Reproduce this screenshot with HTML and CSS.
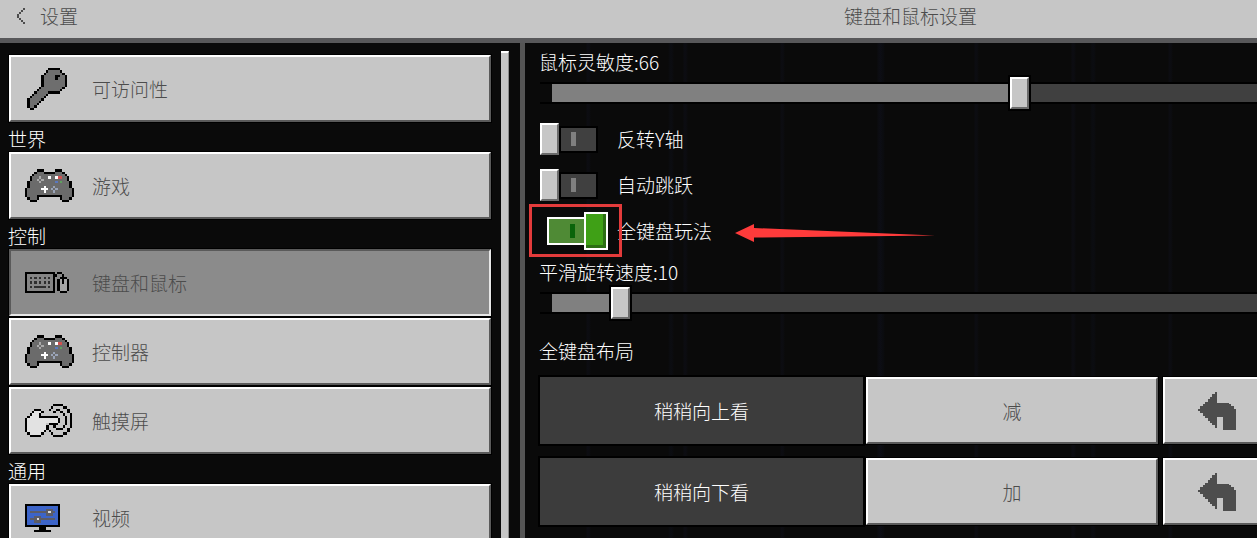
FILE: index.html
```
<!DOCTYPE html>
<html lang="zh-CN">
<head>
    <meta charset="UTF-8">
    <meta name="viewport" content="width=device-width, initial-scale=1.0">
    <title>键盘和鼠标设置</title>
    <link rel="stylesheet" href="styles.css">
</head>
<body>
    <!-- pixel icons used more than once -->
    <svg class="sprites" aria-hidden="true">
        <symbol id="gamepad" viewBox="0 0 21 14">
            <path fill="#6b6b6b" d="M5 1h3v1h5v-1h3v1h1v1h1v2h1v3h1v4h-1v1h-3v-2h-11v2h-3v-1h-1v-4h1v-3h1v-2h1v-1h1z"/>
            <path stroke="#000" d="M5 .5h3M13 .5h3M4 1.5h1M8 1.5h5M16 1.5h1M3 2.5h1M17 2.5h1M2 3.5h1M18 3.5h1M2 4.5h1M18 4.5h1M1 5.5h1M19 5.5h1M1 6.5h1M19 6.5h1M1 7.5h1M19 7.5h1M0 8.5h1M20 8.5h1M0 9.5h1M20 9.5h1M0 10.5h1M20 10.5h1M0 11.5h1M5 11.5h11M20 11.5h1M1 12.5h1M5 12.5h1M15 12.5h1M19 12.5h1M2 13.5h3M16 13.5h3"/>
            <path stroke="#aaa" d="M6 3.5h1M5 4.5h1M7 4.5h1M6 5.5h1"/>
            <path stroke="#9aa4b8" d="M12 7.5h1M11 8.5h1M13 8.5h1M12 9.5h1"/>
            <path stroke="#fff" d="M8 7.5h1M7 8.5h3M8 9.5h1M10 3.5h1M13 3.5h1"/>
            <path stroke="#d05050" d="M14 3.5h2"/>
            <path stroke="#5a78c0" d="M13 5.5h1"/>
            <path stroke="#5ea05e" d="M15 5.5h1"/>
        </symbol>
        <symbol id="undo" viewBox="0 0 16 16">
            <path fill="#4d4d4d" d="M8 0H7V1H6V2H5V3H4V4H3V5H2V6H1V7H0V8H1V9H2V10H3V11H4V12H5V13H6V14H7V15H8V10.5H10.5V16H16V7H15V6H14V5H13V4.5H8z"/>
        </symbol>
    </svg>

    <header class="topbar">
        <button class="back">
            <svg class="back-icon" viewBox="0 0 5 8" aria-hidden="true"><path stroke="#4c4c4c" d="M4 .5h1M3 1.5h1M2 2.5h1M1 3.5h1M1 4.5h1M2 5.5h1M3 6.5h1M4 7.5h1"/></svg>
            设置
        </button>
        <h1 class="title">键盘和鼠标设置</h1>
    </header>

    <div class="layout">
        <nav class="sidebar">
            <div class="menu">
                <button class="item">
                    <svg class="icon icon-key" viewBox="0 0 17 18" aria-hidden="true">
                        <path fill="#6e6e6e" d="M9 1h5v1h1v1h1v5h-1v2h-6v1h-1v1h-1v1h-1v1h-1v1h-1v1h-1v1h-2v-4h1v-1h1v-1h1v-1h1v-1h1v-1h1v-5h1v-1h1z"/>
                        <path stroke="#000" d="M9 .5h5M8 1.5h1M14 1.5h1M7 2.5h1M15 2.5h1M6 3.5h1M12 3.5h2M16 3.5h1M6 4.5h1M12 4.5h1M16 4.5h1M6 5.5h1M16 5.5h1M6 6.5h1M16 6.5h1M6 7.5h1M16 7.5h1M5 8.5h1M15 8.5h1M4 9.5h1M14 9.5h1M3 10.5h1M9 10.5h5M2 11.5h1M8 11.5h1M1 12.5h1M7 12.5h1M0 13.5h1M6 13.5h1M0 14.5h1M5 14.5h1M0 15.5h1M4 15.5h1M0 16.5h1M3 16.5h1M1 17.5h2"/>
                    </svg>
                    可访问性
                </button>
                <h2 class="group">世界</h2>
                <button class="item">
                    <svg class="icon icon-gamepad" aria-hidden="true"><use href="#gamepad"/></svg>
                    游戏
                </button>
                <h2 class="group">控制</h2>
                <button class="item selected">
                    <svg class="icon icon-keyboard" viewBox="0 0 19 9" aria-hidden="true">
                        <path fill="#000" d="M0 0h13v9h-13z"/>
                        <path fill="#858585" d="M1 1h11v7h-11z"/>
                        <path fill="#a6a6a6" d="M15 3h3v5h-3z"/>
                        <path stroke="#000" d="M14 .5h2M13 1.5h1M16 1.5h1M15 2.5h3M14 3.5h1M16 3.5h1M18 3.5h1M14 4.5h1M16 4.5h1M18 4.5h1M14 5.5h1M18 5.5h1M14 6.5h1M18 6.5h1M14 7.5h1M18 7.5h1M15 8.5h3"/>
                        <path stroke="#2e2e2e" d="M2 2.5h1M4 2.5h1M6 2.5h1M8 2.5h1M10 2.5h1M2 4.5h1M4 4.5h1M6 4.5h1M8 4.5h1M10 4.5h1M2 6.5h1M4 6.5h5M10 6.5h1"/>
                    </svg>
                    键盘和鼠标
                </button>
                <button class="item">
                    <svg class="icon icon-gamepad" aria-hidden="true"><use href="#gamepad"/></svg>
                    控制器
                </button>
                <button class="item">
                    <svg class="icon icon-touch" viewBox="0 0 20 14" aria-hidden="true">
                        <path fill="#e2e2e2" d="M4 3h3v3h7v2h-5v3h-1v1h-1v1h-5v-1h-1v-6h1v-2h2z"/>
                        <path stroke="#000" d="M12 .5h4M11 1.5h1M16 1.5h2M4 2.5h3M10 2.5h1M13 2.5h2M18 2.5h1M3 3.5h1M7 3.5h1M12 3.5h1M15 3.5h1M18 3.5h1M2 4.5h1M6 4.5h1M16 4.5h1M19 4.5h1M1 5.5h1M6 5.5h8M17 5.5h1M19 5.5h1M0 6.5h1M14 6.5h1M17 6.5h1M19 6.5h1M0 7.5h1M14 7.5h1M17 7.5h1M19 7.5h1M0 8.5h1M10 8.5h4M17 8.5h1M19 8.5h1M0 9.5h1M9 9.5h1M12 9.5h1M16 9.5h1M19 9.5h1M0 10.5h1M9 10.5h1M13 10.5h3M18 10.5h1M0 11.5h1M8 11.5h1M10 11.5h1M18 11.5h1M1 12.5h1M7 12.5h1M11 12.5h1M16 12.5h2M2 13.5h5M12 13.5h4"/>
                    </svg>
                    触摸屏
                </button>
                <h2 class="group">通用</h2>
                <button class="item">
                    <svg class="icon icon-video" viewBox="0 0 15 12" aria-hidden="true">
                        <path fill="#000" d="M0 0h15v10h-15zM6 10h3v1h2v1h-7v-1h2z"/>
                        <path fill="#3c64c8" d="M1 1h13v8h-13z"/>
                        <path stroke="#5c5c66" d="M2 3.5h11M2 6.5h11M9 2.5h3M9 4.5h3M4 5.5h3M4 7.5h3"/>
                        <path stroke="#ddd" d="M10 3.5h1M5 6.5h1"/>
                    </svg>
                    视频
                </button>
            </div>
            <div class="scrollbar"></div>
        </nav>

        <main class="panel">
            <div class="content">
                <label class="caption" for="sensitivity">鼠标灵敏度:66</label>
                <input class="slider" id="sensitivity" type="range" min="0" max="100" value="66" style="--value: 0.66">

                <div class="option">
                    <input class="toggle" id="invertY" type="checkbox">
                    <label for="invertY">反转Y轴</label>
                </div>
                <div class="option">
                    <input class="toggle" id="autoJump" type="checkbox">
                    <label for="autoJump">自动跳跃</label>
                </div>
                <div class="option">
                    <input class="toggle" id="fullKeyboard" type="checkbox" checked>
                    <label for="fullKeyboard">全键盘玩法</label>
                    <span class="highlight"></span>
                    <svg class="pointer" viewBox="0 0 200 20" aria-hidden="true"><path fill="#ff3b3b" d="M0 10L19 1V5L200 12.5L19 14.5V19z"/></svg>
                </div>

                <label class="caption" for="rotation">平滑旋转速度:10</label>
                <input class="slider" id="rotation" type="range" min="0" max="100" value="10" style="--value: 0.1">

                <h2 class="caption layout-title">全键盘布局</h2>
                <div class="binding">
                    <span class="action">稍稍向上看</span>
                    <button class="key">减</button>
                    <button class="key" aria-label="重置"><svg class="icon-undo" aria-hidden="true"><use href="#undo"/></svg></button>
                </div>
                <div class="binding">
                    <span class="action">稍稍向下看</span>
                    <button class="key">加</button>
                    <button class="key" aria-label="重置"><svg class="icon-undo" aria-hidden="true"><use href="#undo"/></svg></button>
                </div>
            </div>
        </main>
    </div>

    <script>
        // keep the filled part of the track under the thumb
        document.querySelectorAll('.slider').forEach(slider => {
            slider.addEventListener('input', () => {
                slider.style.setProperty('--value', slider.value / 100);
                const label = document.querySelector('label[for="' + slider.id + '"]');
                label.innerText = label.innerText.split(':')[0] + ':' + slider.value;
            });
        });
    </script>
</body>
</html>
```

FILE: styles.css
```
*, *::before, *::after {
    box-sizing: border-box;
}
body {
    margin: 0;
    height: 100vh;
    display: flex;
    flex-direction: column;
    overflow: hidden;
    background-color: #0a0a0a;
    color: #FFFFFF;
    font-family: "Noto Sans CJK SC", sans-serif;
    font-size: 19px;
    font-weight: 300;
    line-height: 30px;
}
h1, h2 {
    margin: 0;
    font-size: inherit;
    font-weight: inherit;
}
button {
    font: inherit;
    color: #4c4c4c;
    cursor: pointer;
}
svg {
    flex: none;
    shape-rendering: crispEdges;
}
.sprites {
    position: absolute;
    width: 0;
    height: 0;
}

/* top bar */
.topbar {
    flex: none;
    display: flex;
    height: 43px;
    padding-bottom: 6px;
    align-items: center;
    overflow: hidden;
    background-color: #c6c6c6;
    border-bottom: 5px solid #58585a;
    color: #4c4c4c;
}
.back {
    flex: 0 0 520px;
    display: flex;
    align-items: center;
    gap: 15px;
    padding: 0 0 0 15px;
    background: none;
    border: none;
}
.back-icon {
    width: 10px;
    height: 16px;
}
/* the right column runs on past the window edge */
.title {
    flex: 1;
    margin-right: -44px;
    text-align: center;
}

.layout {
    flex: 1;
    display: flex;
    min-height: 0;
}

/* left menu */
.sidebar {
    flex: 0 0 525px;
    display: flex;
    gap: 10px;
    padding: 12px 11px 0 9px;
    border-right: 5px solid #555555;
    overflow: hidden;
}
.menu {
    flex: 1;
}
.item {
    display: flex;
    align-items: center;
    width: 100%;
    height: 67px;
    padding: 0 0 0 14px;
    background-color: #c6c6c6;
    border: 2px solid;
    border-color: #FFFFFF #5a5a5a #5a5a5a #FFFFFF;
    box-shadow: 0 0 0 1px #000000;
    text-align: left;
}
.item + .item {
    margin-top: 2px;
}
.item.selected {
    background-color: #8b8b8b;
    border-color: #5a5a5a #e6e6e6 #e6e6e6 #5a5a5a;
}
.group {
    height: 30px;
    margin-left: -1px;
    line-height: 34px;
}
.icon-key {
    width: 40px;
    height: 42px;
    margin: 0 25px 0 2px;
}
.icon-gamepad {
    width: 49px;
    height: 33px;
    margin-right: 18px;
}
.icon-keyboard {
    width: 44px;
    height: 21px;
    margin-right: 23px;
}
.icon-touch {
    width: 47px;
    height: 33px;
    margin-right: 20px;
}
.icon-video {
    width: 35px;
    height: 28px;
    margin-right: 32px;
}
.scrollbar {
    width: 8px;
    margin-top: -4px;
    background-color: #c6c6c6;
    border-top: 2px solid #FFFFFF;
    border-right: 1px solid #8b8b8b;
}

/* right panel */
.panel {
    flex: 1;
    min-width: 0;
    padding: 4px 0 0 15px;
    overflow: hidden;
    background-image:
        repeating-linear-gradient(to right, transparent 0 61px, rgba(30, 34, 80, 0.1) 62px 64px, transparent 66px 97px),
        repeating-linear-gradient(to right, transparent 0 143px, rgba(20, 30, 64, 0.12) 145px 147px, transparent 149px 211px);
}
.content {
    margin-right: -14px;
}
.caption {
    display: block;
    margin-left: -1px;
}
.slider {
    -webkit-appearance: none;
    appearance: none;
    display: block;
    width: 100%;
    height: 32px;
    margin: 0;
    background: none;
    cursor: pointer;
}
.slider::-webkit-slider-runnable-track {
    --fill: calc(10px + (100% - 19px) * var(--value));
    height: 18px;
    background: linear-gradient(to right, transparent 12px, #808080 12px, #808080 var(--fill), #404040 var(--fill));
    box-shadow: 0 2px 0 #000000, 0 -2px 0 #000000;
}
.slider::-webkit-slider-thumb {
    -webkit-appearance: none;
    width: 19px;
    height: 32px;
    margin-top: -7px;
    background-color: #c6c6c6;
    border: 2px solid;
    border-color: #FFFFFF #6a6a6a #6a6a6a #FFFFFF;
    box-shadow: 0 0 0 2px #000000;
}
.option {
    position: relative;
    display: flex;
    align-items: center;
    height: 46px;
}
.slider + .option {
    margin-top: 7px;
}
.option + .caption {
    margin-top: 3px;
}
.toggle {
    -webkit-appearance: none;
    appearance: none;
    display: flex;
    align-items: center;
    width: 69px;
    height: 38px;
    margin: 0 8px 0 0;
    cursor: pointer;
}
.toggle::before {
    content: "";
    width: 19px;
    height: 32px;
    margin-right: 2px;
    background-color: #c6c6c6;
    border: 2px solid;
    border-color: #FFFFFF #6a6a6a #6a6a6a #FFFFFF;
}
.toggle::after {
    content: "";
    width: 35px;
    height: 23px;
    background: linear-gradient(#808080, #808080) 10px center / 5px 14px no-repeat #404040;
    box-shadow: 0 0 0 2px #000000;
}
.toggle:checked {
    flex-direction: row-reverse;
    justify-content: flex-end;
    padding-left: 7px;
}
.toggle:checked::before {
    width: 24px;
    height: 38px;
    margin: 0;
    background-color: #3fa016;
    border-color: #FFFFFF;
    box-shadow: inset -3px -3px 0 #2c6e14;
}
.toggle:checked::after {
    width: 37px;
    height: 28px;
    background: linear-gradient(#0a640a, #0a640a) 21px center / 5px 14px no-repeat #4f8a35;
    border: 2px solid #FFFFFF;
    border-right: none;
    box-shadow: none;
}
.highlight {
    position: absolute;
    left: -11px;
    top: -4px;
    width: 93px;
    height: 53px;
    border: 3px solid #e33b3b;
    pointer-events: none;
}
.pointer {
    position: absolute;
    left: 195px;
    top: 15px;
    width: 200px;
    height: 20px;
    shape-rendering: auto;
}
.layout-title {
    margin: 17px 0 11px -1px;
}

/* key bindings */
.binding {
    display: grid;
    grid-template-columns: 326fr 297fr 108fr;
    height: 67px;
    margin-bottom: 14px;
}
.action, .key {
    display: flex;
    align-items: center;
    justify-content: center;
}
.action {
    margin-right: 3px;
    background-color: #3c3c3c;
    box-shadow: 0 0 0 2px #000000;
}
.key {
    padding: 0;
    background-color: #c6c6c6;
    border: 2px solid;
    border-color: #FFFFFF #5a5a5a #5a5a5a #FFFFFF;
    box-shadow: 0 0 0 1px #000000;
}
.action + .key {
    margin-right: 5px;
}
.icon-undo {
    width: 38px;
    height: 38px;
}
```
